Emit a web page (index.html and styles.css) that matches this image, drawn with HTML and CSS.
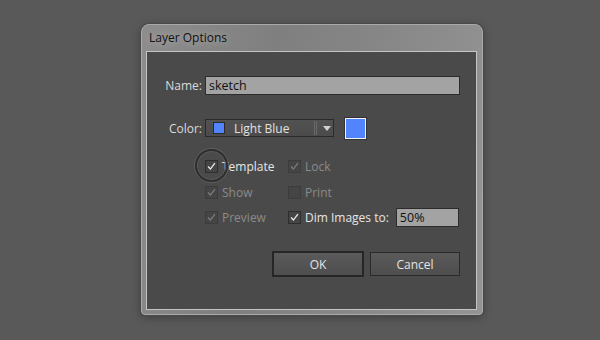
FILE: index.html
```html
<!DOCTYPE html>
<html lang="en">
<head>
    <meta charset="UTF-8">
    <title>Layer Options</title>
    <link rel="stylesheet" href="styles.css">
</head>
<body>
    <div class="window">
        <div class="titlebar">Layer Options</div>
        <div class="panel">
            <div class="row name-row">
                <span class="label">Name:</span>
                <div class="field name-field">sketch</div>
            </div>

            <div class="row color-row">
                <span class="label">Color:</span>
                <div class="select">
                    <span class="mini-swatch"></span>
                    <span class="select-text">Light Blue</span>
                    <span class="select-sep"></span>
                    <span class="select-arrow"></span>
                </div>
                <span class="swatch"></span>
            </div>

            <div class="checks">
                <div class="check">
                    <span class="box on">
                        <svg viewBox="0 0 13 13"><path d="M2.5 6.5 L5.2 9.5 L10.5 2.5" /></svg>
                    </span>
                    <span class="check-text">Template</span>
                    <span class="focus-ring"></span>
                </div>
                <div class="check disabled">
                    <span class="box on">
                        <svg viewBox="0 0 13 13"><path d="M2.5 6.5 L5.2 9.5 L10.5 2.5" /></svg>
                    </span>
                    <span class="check-text">Lock</span>
                </div>
                <div class="check disabled">
                    <span class="box on">
                        <svg viewBox="0 0 13 13"><path d="M2.5 6.5 L5.2 9.5 L10.5 2.5" /></svg>
                    </span>
                    <span class="check-text">Show</span>
                </div>
                <div class="check disabled">
                    <span class="box"></span>
                    <span class="check-text">Print</span>
                </div>
                <div class="check disabled">
                    <span class="box on">
                        <svg viewBox="0 0 13 13"><path d="M2.5 6.5 L5.2 9.5 L10.5 2.5" /></svg>
                    </span>
                    <span class="check-text">Preview</span>
                </div>
                <div class="check">
                    <span class="box on">
                        <svg viewBox="0 0 13 13"><path d="M2.5 6.5 L5.2 9.5 L10.5 2.5" /></svg>
                    </span>
                    <span class="check-text">Dim Images to:</span>
                    <div class="field dim-field">50%</div>
                </div>
            </div>

            <div class="buttons">
                <button class="btn btn-default">OK</button>
                <button class="btn">Cancel</button>
            </div>
        </div>
    </div>
</body>
</html>
```

FILE: styles.css
```css
* {
    margin: 0;
    padding: 0;
    box-sizing: border-box;
}

body {
    background: #595959;
    font-family: 'Open Sans', 'Liberation Sans', sans-serif;
    font-size: 12px;
    width: 600px;
    height: 340px;
    overflow: hidden;
}

.window {
    margin: 24px 0 0 141px;
    width: 342px;
    height: 291px;
    border: 1px solid #a9a9a9;
    border-radius: 8px 8px 4px 4px;
    background: linear-gradient(100deg, #8d8d8d 0%, #7f7f7f 35%, #868686 60%, #959595 100%);
    box-shadow: 0 0 0 1px #4a4a4a, 0 2px 8px rgba(0, 0, 0, 0.35);
    padding: 0 5px 4px 4px;
    display: flex;
    flex-direction: column;
}

.titlebar {
    height: 26px;
    line-height: 26px;
    padding-left: 3px;
    color: #111;
    font-family: 'Open Sans', sans-serif;
    font-size: 12px;
    text-shadow: 0 0 8px rgba(200, 200, 200, 0.9);
}

.panel {
    flex: 1;
    background: #4a4a4a;
    border: 1px solid #c4c4c4;
    padding: 24px 16px 0 0;
    color: #dadada;
    position: relative;
}

.row {
    display: flex;
    align-items: center;
    gap: 3px;
}

.label {
    width: 55px;
    text-align: right;
}

.field {
    background: #a3a3a3;
    border: 1px solid #2c2c2c;
    color: #111;
    padding-left: 3px;
    font-size: 12.5px;
    line-height: 17px;
}

.name-field {
    flex: 1;
    height: 19px;
}

.color-row {
    margin-top: 23px;
    height: 20px;
}

.select {
    width: 129px;
    height: 18px;
    background: linear-gradient(#525252, #4b4b4b);
    border: 1px solid #2a2a2a;
    display: flex;
    align-items: center;
    padding-left: 7px;
}

.mini-swatch {
    width: 12px;
    height: 12px;
    background: #5384ff;
    border: 1px solid #2a2a2a;
}

.select-text {
    margin-left: 9px;
    width: 80px;
    color: #e2e2e2;
}

.select-sep {
    width: 3px;
    height: 14px;
    border-left: 1px solid #6a6a6a;
    border-right: 1px solid #6a6a6a;
}

.select-arrow {
    margin-left: 6px;
    width: 0;
    height: 0;
    border-left: 4px solid transparent;
    border-right: 4px solid transparent;
    border-top: 5px solid #d0d0d0;
}

.swatch {
    margin-left: 8px;
    width: 21px;
    height: 21px;
    background: #5384ff;
    border: 1px solid #f2f2f2;
    box-shadow: 0 0 0 1px #333;
}

.checks {
    margin: 16px 0 0 58px;
    display: grid;
    grid-template-columns: 83px auto;
    grid-template-rows: 25px 26px 25px;
}

.check {
    display: flex;
    align-items: center;
    gap: 4px;
    position: relative;
    color: #e6e6e6;
}

.check.disabled {
    color: #8a8a8a;
}

.box {
    width: 13px;
    height: 13px;
    border: 1px solid #2e2e2e;
    background: #454545;
    display: flex;
}

.box svg {
    width: 13px;
    height: 13px;
    margin: -1px 0 0 0;
}

.box path {
    fill: none;
    stroke: #ececec;
    stroke-width: 1.6;
}

.check.disabled .box {
    border-color: #3c3c3c;
}

.check.disabled .box path {
    stroke: #7c7c7c;
}

.focus-ring {
    position: absolute;
    left: -10px;
    top: -5px;
    width: 33px;
    height: 33px;
    border: 2px solid #2f2f2f;
    border-radius: 50%;
    box-shadow: 0 0 0 1px #5e5e5e, inset 0 0 0 1px #5a5a5a;
}

.dim-field {
    margin-left: 3px;
    width: 63px;
    height: 19px;
}

.buttons {
    margin-top: 21px;
    display: flex;
    justify-content: flex-end;
    align-items: center;
    gap: 6px;
}

.btn {
    width: 90px;
    height: 24px;
    background: linear-gradient(#5a5a5a, #4e4e4e);
    border: 1px solid #2a2a2a;
    color: #e4e4e4;
    font-family: 'Open Sans', sans-serif;
    font-size: 12px;
}

.btn-default {
    width: 92px;
    height: 26px;
    border: 2px solid #262626;
}
```
